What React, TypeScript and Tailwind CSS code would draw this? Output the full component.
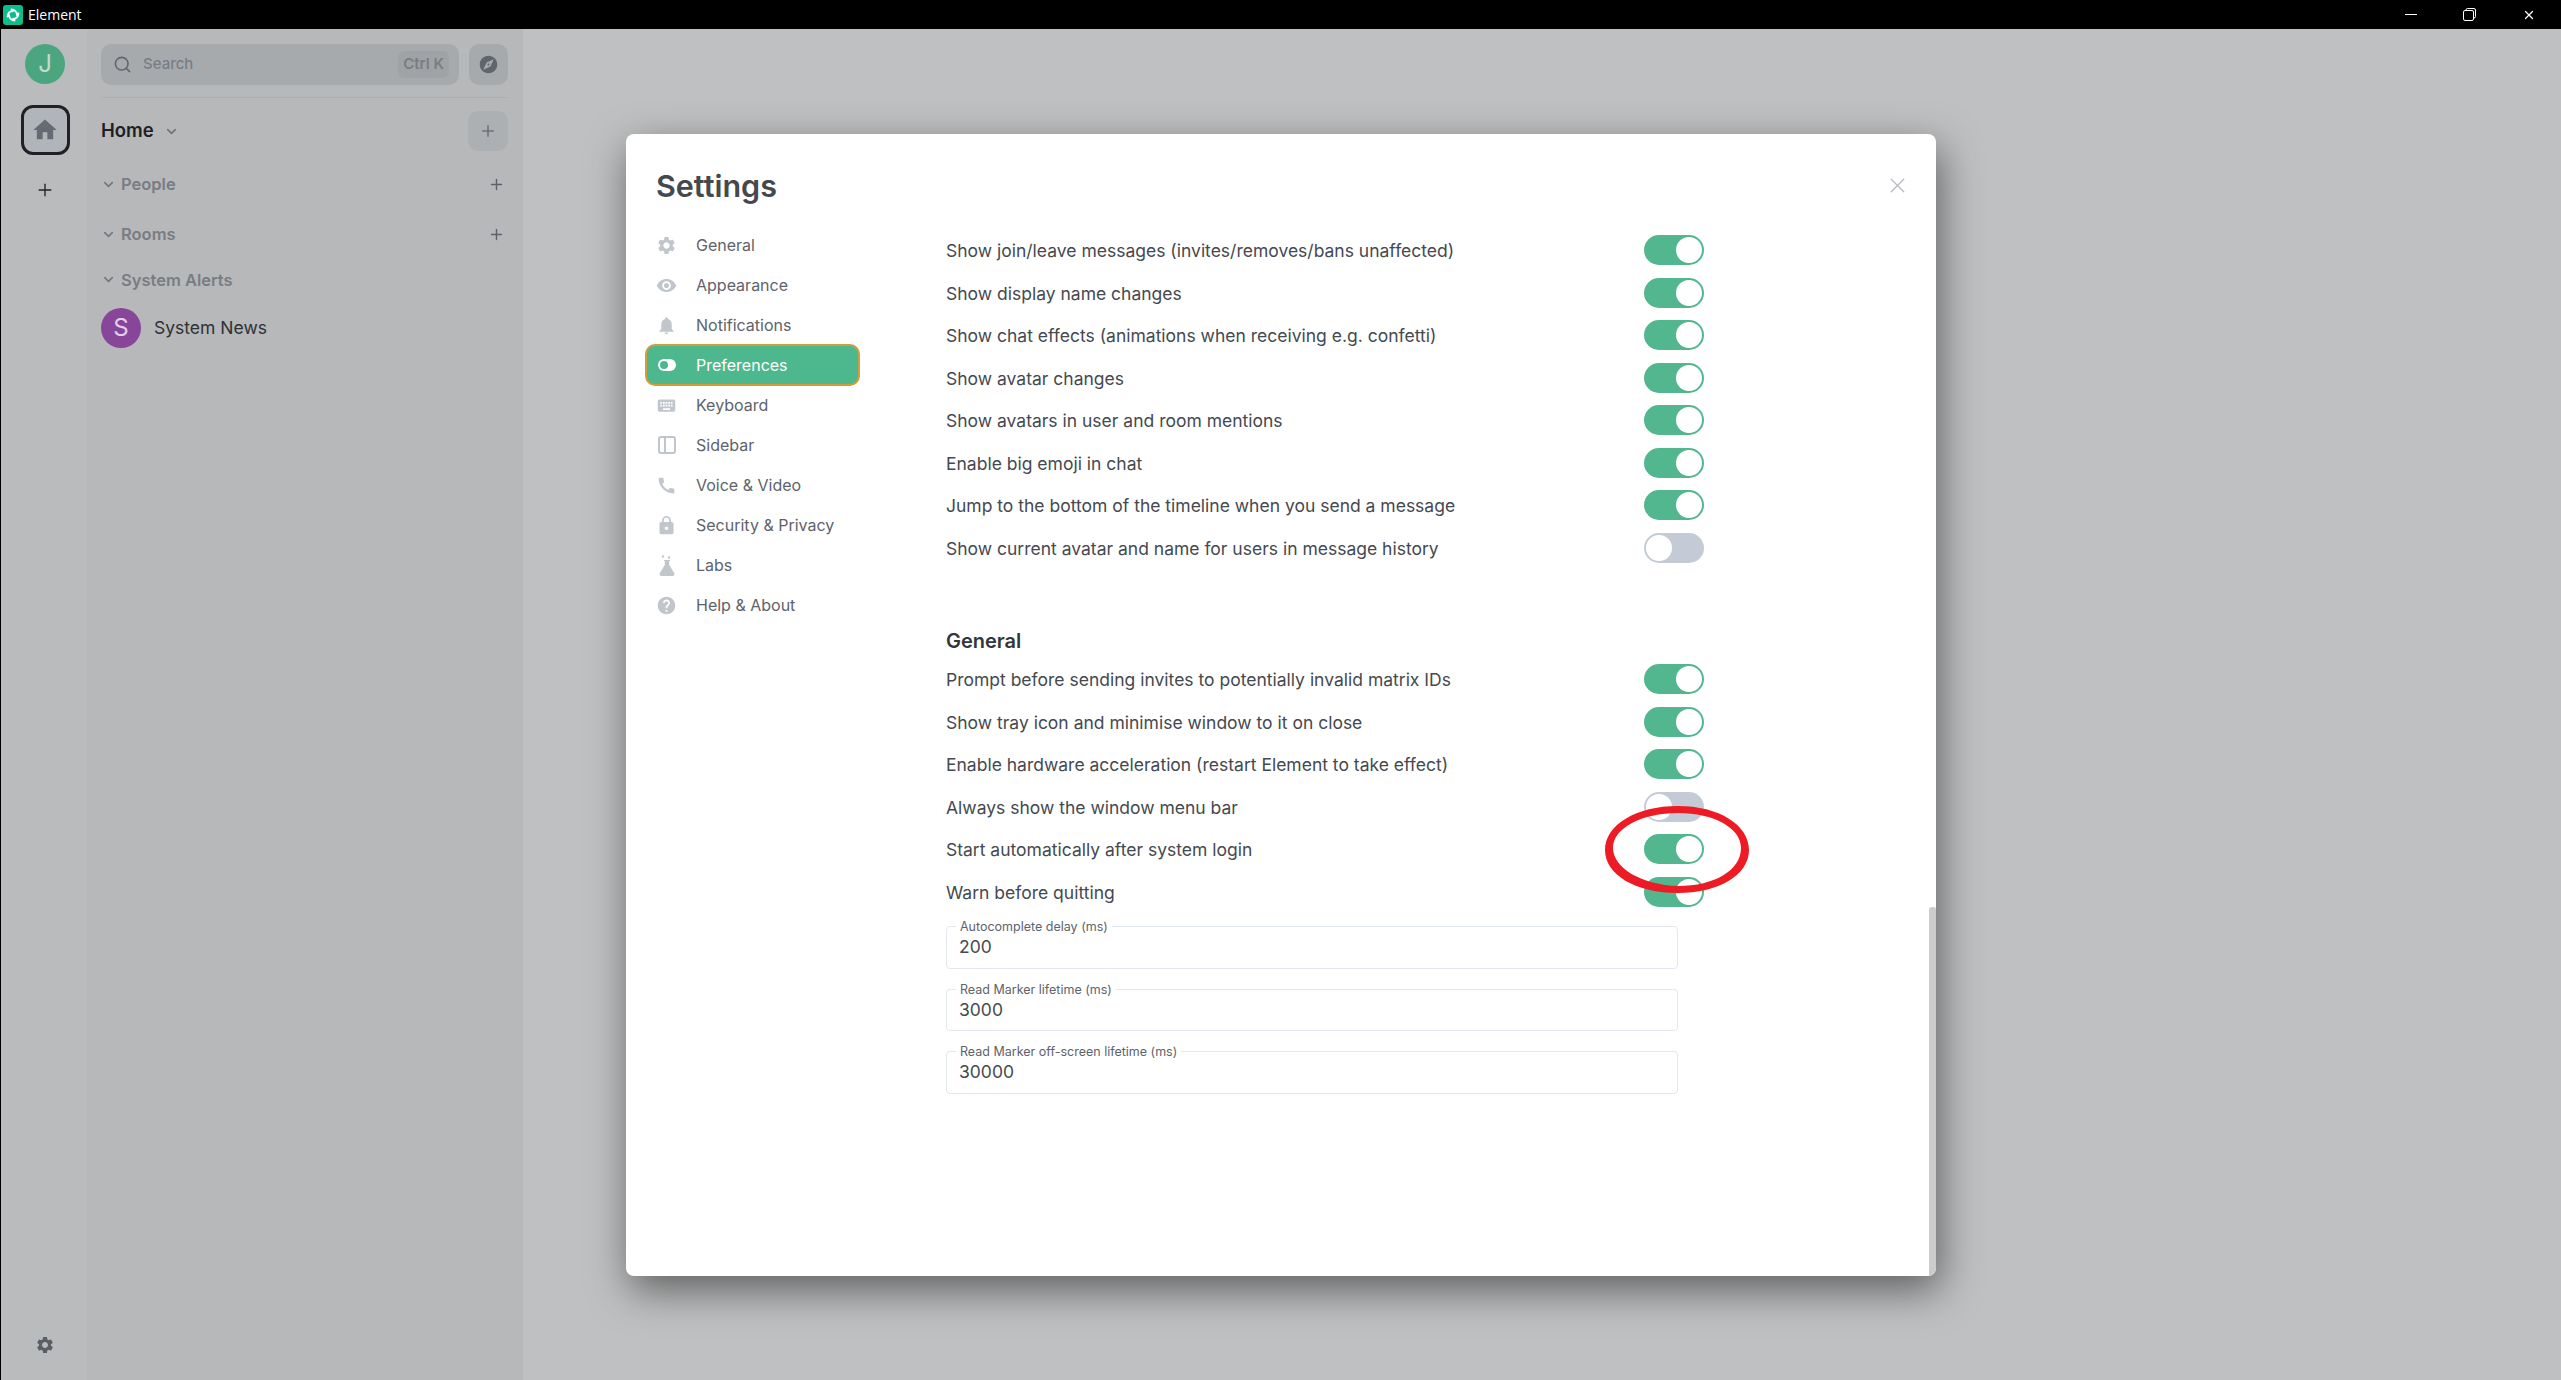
import { ChevronDown, Plus, Search, X } from 'lucide-react'
import { MdCall, MdExplore, MdHelp, MdHome, MdKeyboard, MdLock, MdNotifications, MdSettings, MdVisibility } from 'react-icons/md'

const timeline = [
  ['Show join/leave messages (invites/removes/bans unaffected)', true],
  ['Show display name changes', true],
  ['Show chat effects (animations when receiving e.g. confetti)', true],
  ['Show avatar changes', true],
  ['Show avatars in user and room mentions', true],
  ['Enable big emoji in chat', true],
  ['Jump to the bottom of the timeline when you send a message', true],
  ['Show current avatar and name for users in message history', false],
] as const

const general = [
  ['Prompt before sending invites to potentially invalid matrix IDs', true],
  ['Show tray icon and minimise window to it on close', true],
  ['Enable hardware acceleration (restart Element to take effect)', true],
  ['Always show the window menu bar', false],
  ['Start automatically after system login', true],
  ['Warn before quitting', true],
] as const

const fields = [
  ['Autocomplete delay (ms)', '200'],
  ['Read Marker lifetime (ms)', '3000'],
  ['Read Marker off-screen lifetime (ms)', '30000'],
]

function ToggleGlyph() {
  return (
    <svg width="18" height="12" viewBox="0 0 18 12">
      <rect width="18" height="12" rx="6" fill="#fff" />
      <circle cx="6" cy="6" r="4" fill="#4db88d" />
    </svg>
  )
}

function SidebarGlyph() {
  return (
    <svg width="18" height="18" viewBox="0 0 18 18" fill="none" stroke="#c1c6cd" strokeWidth="2">
      <rect x="1" y="1" width="16" height="16" rx="2" />
      <path d="M7 1v16" />
    </svg>
  )
}

function FlaskGlyph() {
  return (
    <svg width="16" height="21" viewBox="0 0 16 21" fill="#c1c6cd">
      <circle cx="4" cy="1.5" r="1.2" />
      <circle cx="10" cy="2.5" r="1.2" />
      <path d="M5 5h6v1h-.8v4l5 8a2 2 0 0 1-1.700 3H2.500a2 2 0 0 1-1.700-3l5-8V6H5z" />
    </svg>
  )
}

const nav = [
  ['General', <MdSettings size={21} color="#c1c6cd" />],
  ['Appearance', <MdVisibility size={21} color="#c1c6cd" />],
  ['Notifications', <MdNotifications size={21} color="#c1c6cd" />],
  ['Preferences', <ToggleGlyph />],
  ['Keyboard', <MdKeyboard size={21} color="#c1c6cd" />],
  ['Sidebar', <SidebarGlyph />],
  ['Voice & Video', <MdCall size={23} color="#c1c6cd" />],
  ['Security & Privacy', <MdLock size={21} color="#c1c6cd" />],
  ['Labs', <FlaskGlyph />],
  ['Help & About', <MdHelp size={21} color="#c1c6cd" />],
] as const

function Toggle({ on }: { on: boolean }) {
  return (
    <div className={`flex h-[30px] w-[60px] items-center rounded-full px-[2px] ${on ? 'justify-end bg-[#52b78f]' : 'justify-start bg-[#c5cbd6]'}`}>
      <div className="h-[26px] w-[26px] rounded-full bg-white" />
    </div>
  )
}

function Row({ label, on }: { label: string; on: boolean }) {
  return (
    <div className="flex h-[42.5px] w-[759px] items-center justify-between text-[17.5px] text-[#454950]">
      <span className="mt-[2px] pl-[1px]">{label}</span>
      <Toggle on={on} />
    </div>
  )
}

function SectionHead({ label, plus }: { label: string; plus?: boolean }) {
  return (
    <div className="flex items-center justify-between pr-[3px]">
      <div className="flex items-center gap-[5px] text-[16.5px] font-semibold text-[#797d83]">
        <ChevronDown size={15} strokeWidth={2.5} color="#73777d" />
        {label}
      </div>
      {plus && <Plus size={17} color="#5d6168" />}
    </div>
  )
}

export default function App() {
  return (
    <div className="relative flex h-screen w-full flex-col overflow-hidden font-['Inter',sans-serif]">
      <header className="flex h-[29px] shrink-0 items-center justify-between bg-black pr-[25px] pl-[3px] text-white">
        <div className="flex items-center gap-[5px]">
          <svg width="20" height="20" viewBox="0 0 20 20">
            <rect width="20" height="20" rx="3" fill="#0dbd8b" />
            <path d="M8.5 4.5A5.5 5.5 0 0 1 14 10M15.5 8.5A5.5 5.5 0 0 1 10 14M11.5 15.5A5.5 5.5 0 0 1 6 10M4.5 11.5A5.5 5.5 0 0 1 10 6" fill="none" stroke="#fff" strokeWidth="1.8" strokeLinecap="round" />
          </svg>
          <span className="font-['Open_Sans',sans-serif] text-[14px]">Element</span>
        </div>
        <div className="flex items-center gap-[46px]">
          <div className="h-px w-[12px] bg-white" />
          <svg width="13" height="13" viewBox="0 0 13 13" fill="none" stroke="#fff">
            <rect x="0.5" y="2.5" width="10" height="10" rx="1.5" />
            <path d="M3 2.5V2a1.5 1.5 0 0 1 1.5-1.5H11A1.5 1.5 0 0 1 12.5 2v6.5A1.5 1.5 0 0 1 11 10h-.5" />
          </svg>
          <X size={14} strokeWidth={1.2} absoluteStrokeWidth color="#fff" />
        </div>
      </header>

      <div className="flex min-h-0 flex-1 border-l border-black">
        <aside className="flex w-[86px] shrink-0 flex-col items-center bg-[#b9bbbc] pt-[15px] pb-[25px] pl-[2px]">
          <div className="flex h-[40px] w-[40px] items-center justify-center rounded-full bg-[#4ba680] text-[24px] text-[#c5d9cf]">J</div>
          <div className="mt-[21px] flex h-[50px] w-[49px] items-center justify-center rounded-[12px] border-[3px] border-[#1f2124] bg-[#b1b4b8]">
            <MdHome size={28} color="#666b73" />
          </div>
          <Plus size={20} strokeWidth={1.6} color="#222" className="mt-[25px]" />
          <MdSettings size={20} color="#5a5e65" className="mt-auto" />
        </aside>

        <nav className="w-[436px] shrink-0 bg-[#b6b8b9] pt-[15px] pr-[15px] pl-[14px]">
          <div className="flex items-center gap-[10px] border-b border-[#aeb0b2] pb-[12px]">
            <div className="flex h-[41px] w-[358px] items-center rounded-[10px] bg-[#a7aaad] pr-[10px] pl-[12px] text-[15px] font-medium text-[#797d83]">
              <Search size={19} color="#60646b" strokeWidth={2} />
              <span className="ml-[11px]">Search</span>
              <span className="ml-auto rounded-[6px] bg-[#a0a3a6] px-[5px] py-[2px] text-[15px] font-semibold">Ctrl K</span>
            </div>
            <div className="flex h-[41px] w-[39px] items-center justify-center rounded-[10px] bg-[#a7aaad]">
              <MdExplore size={21} color="#60646b" />
            </div>
          </div>
          <div className="mt-[13px] flex items-center justify-between">
            <div className="flex items-center gap-[10px] text-[18.5px] font-semibold text-[#1e2124]">
              Home
              <ChevronDown size={15} strokeWidth={2.5} color="#6d7177" />
            </div>
            <div className="flex h-[40px] w-[40px] items-center justify-center rounded-[10px] bg-[#adb0b3]">
              <Plus size={18} color="#6d7177" />
            </div>
          </div>
          <div className="mt-[21px]"><SectionHead label="People" plus /></div>
          <div className="mt-[25px]"><SectionHead label="Rooms" plus /></div>
          <div className="mt-[21px]"><SectionHead label="System Alerts" /></div>
          <div className="mt-[16px] flex items-center gap-[13px]">
            <div className="flex h-[40px] w-[40px] items-center justify-center rounded-full bg-[#88469a] text-[24px] text-[#e3cfe8]">S</div>
            <span className="text-[17.5px] text-[#2e3136]">System News</span>
          </div>
        </nav>

        <main className="flex-1 bg-[#bfc0c1]" />
      </div>

      {/* settings dialog */}
      <section className="absolute top-[134px] left-[626px] h-[1142px] w-[1310px] overflow-hidden rounded-[8px] bg-white pl-[19px] shadow-[4px_14px_40px_rgba(0,0,0,0.5)]">
        <h1 className="flex h-[91px] items-start pt-[33px] pl-[11px] text-[30.5px] leading-[38px] font-semibold text-[#45484d]">Settings</h1>
        <X size={25} strokeWidth={1.3} color="#b8bcc2" className="absolute top-[39px] right-[26px]" />
        <div className="flex">
          <ul className="w-[300px] shrink-0">
            {nav.map(([label, icon]) => {
              const active = label === 'Preferences'
              return (
                <li key={label} className={`flex h-[40px] w-[215px] items-center rounded-[10px] ${active ? 'h-[42px] -my-px border-2 border-[#d39d3c] bg-[#4db88d] text-white' : 'border-2 border-transparent text-[#5e636b]'}`}>
                  <span className="w-[49px] pl-[9px]">
                    <span className="flex w-[21px] justify-center">{icon}</span>
                  </span>
                  <span className="text-[16px]">{label}</span>
                </li>
              )
            })}
          </ul>
          <div className="pt-[4px]">
            {timeline.map(([label, on]) => <Row key={label} label={label} on={on} />)}
            <h2 className="flex h-[89px] items-end pb-[2px] pl-[1px] text-[20px] font-semibold text-[#33363b]">General</h2>
            {general.map(([label, on]) => <Row key={label} label={label} on={on} />)}
            <div className="mt-[13px] ml-[1px] flex flex-col gap-[20px]">
              {fields.map(([label, value]) => (
                <div key={label} className="relative h-[42.5px] w-[732px] rounded-[4px] border border-[#e3e8f0] pt-[8px] pl-[12px] text-[17.5px] leading-[24px] text-[#454950]">
                  <span className="absolute -top-[8px] left-[9px] bg-white px-[4px] text-[12.5px] leading-[16px] text-[#5e636b]">{label}</span>
                  {value}
                </div>
              ))}
            </div>
          </div>
        </div>
        <div className="absolute top-[773px] right-0 bottom-0 w-[7px] rounded-t-[3px] bg-[#cccccc]" />
      </section>

      {/* hand-drawn annotation over the screenshot */}
      <svg className="absolute top-[805px] left-[1604px]" width="146" height="90" viewBox="0 0 146 90">
        <path fillRule="evenodd" fill="#ed1c24" d="M1 45C1 20 32 1 74 1C115 1 145 20 145 45C145 71 113 88 74 88C32 88 1 70 1 45ZM9 43C9 63 38 80 74 81C111 81 137 65 137 43C137 23 110 8 74 8C38 8 9 23 9 43Z" />
      </svg>
    </div>
  )
}
